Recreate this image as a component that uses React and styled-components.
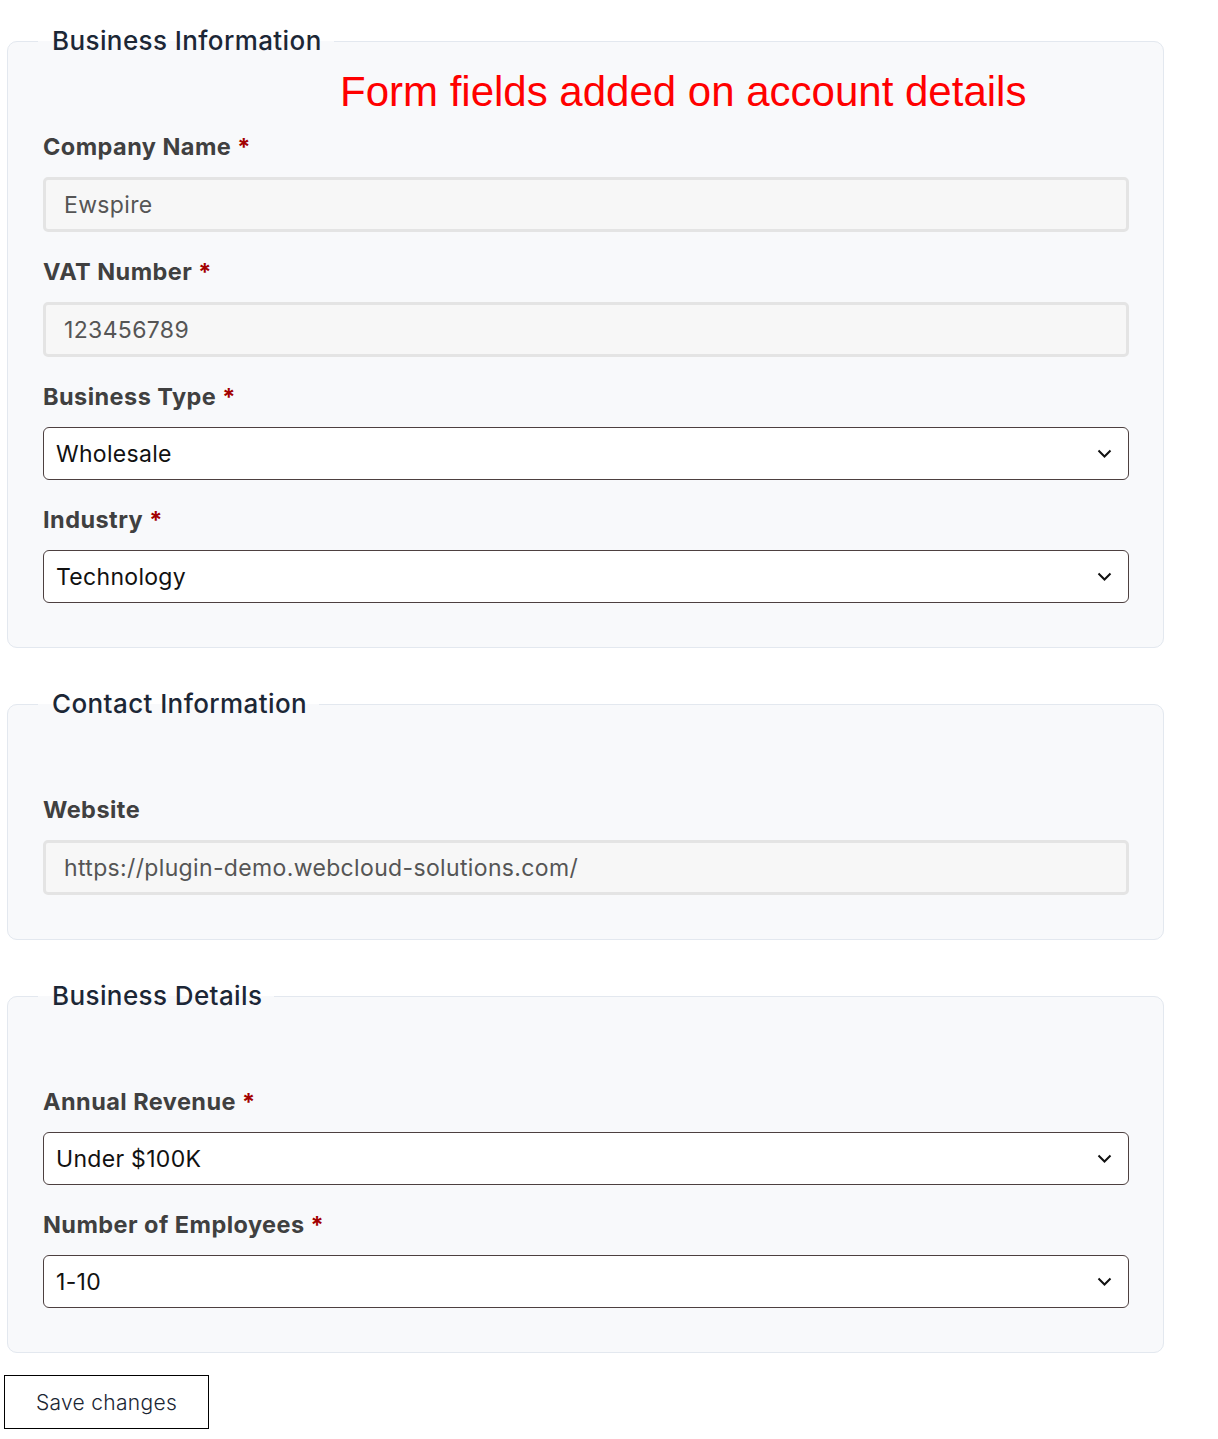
import React from 'react';
import styled, { createGlobalStyle } from 'styled-components';

const GlobalStyle = createGlobalStyle`
  body {
    margin: 0;
    background: #ffffff;
    font-family: Inter, "Open Sans", sans-serif;
  }
`;

const Page = styled.div`
  width: 1218px;
  padding: 25px 0 10px 4px;
  box-sizing: border-box;
`;

const Section = styled.fieldset`
  width: 1157px;
  box-sizing: border-box;
  margin: 0 0 40px 3px;
  padding: 0 34px 44px 35px;
  border: 1px solid #e3e8ef;
  border-radius: 10px;
  background-color: #f8f9fb;
  min-inline-size: 0;
  &:last-of-type {
    margin-bottom: 22px;
  }
`;

const Legend = styled.legend`
  margin-left: -5px;
  padding: 0 12px 0 14px;
  font-size: 26px;
  line-height: 32px;
  font-weight: 500;
  color: #1c2736;
  letter-spacing: 0.4px;
`;

const Intro = styled.div`
  height: 75px;
  padding-top: 11px;
  box-sizing: border-box;
`;

const Note = styled.div`
  margin-left: 297px;
  font-family: "Liberation Sans", Arial, sans-serif;
  font-size: 42px;
  line-height: 48px;
  color: #ff0000;
`;

const FieldRow = styled.div`
  display: flex;
  flex-direction: column;
  & + & {
    margin-top: 25px;
  }
`;

const Label = styled.label`
  display: block;
  height: 30px;
  margin-bottom: 15px;
  font-size: 23.5px;
  line-height: 30px;
  font-weight: 700;
  letter-spacing: 0.45px;
  color: #404040;
`;

const Required = styled.span`
  margin-left: 6px;
  color: #a30000;
`;

const TextInput = styled.input`
  width: 100%;
  height: 55px;
  box-sizing: border-box;
  padding: 0 18px;
  border: 3px solid #e4e4e4;
  border-radius: 5px;
  background-color: #f7f7f7;
  font-family: inherit;
  font-size: 23px;
  letter-spacing: 0.35px;
  color: #555555;
  outline: none;
`;

const SelectBox = styled.div`
  display: flex;
  align-items: center;
  justify-content: space-between;
  height: 53px;
  box-sizing: border-box;
  padding: 0 16px 0 12px;
  border: 1px solid #4d4040;
  border-radius: 6px;
  background-color: #ffffff;
  font-size: 23px;
  letter-spacing: 0.3px;
  color: #111111;
`;

const SaveButton = styled.button`
  width: 205px;
  height: 54px;
  border: 1.5px solid #000000;
  border-radius: 0;
  background-color: #ffffff;
  font-family: inherit;
  font-size: 21px;
  font-weight: 300;
  letter-spacing: 0.3px;
  color: #1b2633;
  cursor: pointer;
`;

const Chevron = () => (
  <svg width="15" height="9" viewBox="0 0 15 9" fill="none">
    <polyline points="1.5,1.5 7.5,7.5 13.5,1.5" stroke="#111" strokeWidth="2" />
  </svg>
);

const Field = ({ label, required, value, type }) => {
  return (
    <FieldRow>
      <Label>
        {label}
        {required && <Required>*</Required>}
      </Label>
      {type === 'select' ? (
        <SelectBox>
          <span>{value}</span>
          <Chevron />
        </SelectBox>
      ) : (
        <TextInput readOnly defaultValue={value} />
      )}
    </FieldRow>
  );
};

const sections = [
  {
    title: 'Business Information',
    note: 'Form fields added on account details',
    fields: [
      { label: 'Company Name', required: true, value: 'Ewspire' },
      { label: 'VAT Number', required: true, value: '123456789' },
      { label: 'Business Type', required: true, value: 'Wholesale', type: 'select' },
      { label: 'Industry', required: true, value: 'Technology', type: 'select' },
    ],
  },
  {
    title: 'Contact Information',
    fields: [
      { label: 'Website', value: 'https://plugin-demo.webcloud-solutions.com/' },
    ],
  },
  {
    title: 'Business Details',
    fields: [
      { label: 'Annual Revenue', required: true, value: 'Under $100K', type: 'select' },
      { label: 'Number of Employees', required: true, value: '1-10', type: 'select' },
    ],
  },
];

function App() {
  return (
    <Page>
      <GlobalStyle />
      {sections.map((s) => (
        <Section key={s.title}>
          <Legend>{s.title}</Legend>
          <Intro>{s.note && <Note>{s.note}</Note>}</Intro>
          {s.fields.map((f) => (
            <Field key={f.label} {...f} />
          ))}
        </Section>
      ))}
      <SaveButton>Save changes</SaveButton>
    </Page>
  );
}

export default App;
